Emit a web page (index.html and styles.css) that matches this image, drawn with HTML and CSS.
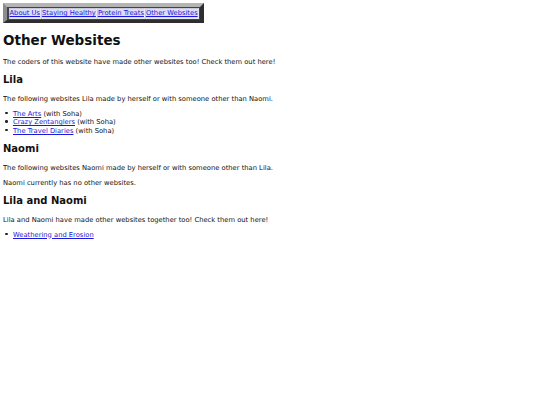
FILE: index.html
```html
<!DOCTYPE html>
<html>
<head>
<meta charset="utf-8">
<link rel="stylesheet" href="styles.css">
</head>
<body>
<table class="nav">
<tr>
<td><a href="#">About Us</a></td>
<td><a href="#">Staying Healthy</a></td>
<td><a href="#">Protein Treats</a></td>
<td><a href="#">Other Websites</a></td>
</tr>
</table>
<h1>Other Websites</h1>
<p>The coders of this website have made other websites too! Check them out here!</p>
<h2>Lila</h2>
<p>The following websites Lila made by herself or with someone other than Naomi.</p>
<ul>
<li><a href="#">The Arts</a> (with Soha)</li>
<li><a href="#">Crazy Zentanglers</a> (with Soha)</li>
<li><a href="#">The Travel Diaries</a> (with Soha)</li>
</ul>
<h2>Naomi</h2>
<p>The following websites Naomi made by herself or with someone other than Lila.</p>
<p>Naomi currently has no other websites.</p>
<h2>Lila and Naomi</h2>
<p>Lila and Naomi have made other websites together too! Check them out here!</p>
<ul>
<li><a href="#">Weathering and Erosion</a></li>
</ul>
</body>
</html>
```
FILE: styles.css
```css
body {
  margin: 3px;
  font-family: "DejaVu Sans", Verdana, sans-serif;
  font-size: 6.75px;
  line-height: 8.5px;
  color: #111;
  background: #fff;
}
a {
  color: #1a1ad8;
}
.nav {
  border-style: solid;
  border-width: 4px 4px 3px 4px;
  border-color: #b4b4b4 #2e2e2e #2e2e2e #8c8c8c;
  background: #444;
  border-spacing: 0;
  padding: 1px 1.5px;
}
.nav td {
  border: 1px solid #e8e8f4;
  border-top-color: #c8c8d8;
  border-left-color: #c8c8d8;
  background: #dcdcf6;
  padding: 0;
}
h1 {
  font-size: 13.5px;
  line-height: 16px;
  margin: 9px 0 10px;
}
h2 {
  font-size: 10px;
  line-height: 12px;
  margin: 8px 0 9px;
}
p {
  margin: 6px 0;
}
ul {
  margin: 6px 0;
  padding-left: 10px;
}
li {
  list-style: none;
}
li::before {
  content: "";
  display: inline-block;
  width: 2.5px;
  height: 2.5px;
  border-radius: 50%;
  background: #222;
  margin-left: -8px;
  margin-right: 5.5px;
  vertical-align: 1.5px;
}
```
